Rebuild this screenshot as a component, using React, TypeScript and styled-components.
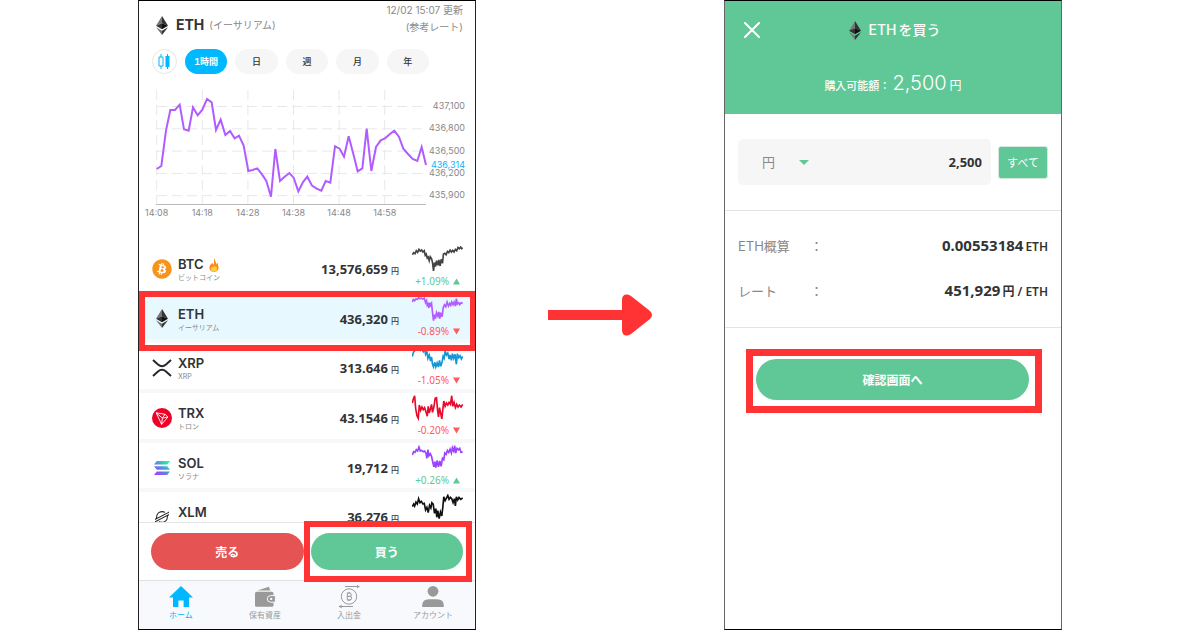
import React from "react";
import styled, { createGlobalStyle, css } from "styled-components";
import { FaBitcoin } from "react-icons/fa";
import { SiStellar } from "react-icons/si";

const GREEN = "#5fc896";
const RED = "#ff3333";
const BLUE = "#00b8ff";
const UI = `Inter, "Noto Sans CJK JP", sans-serif`;
const NUM = `"Noto Sans", "Noto Sans CJK JP", sans-serif`;

const GlobalStyle = createGlobalStyle`
  *, *::before, *::after { box-sizing: border-box; }
  body { margin: 0; background: #fff; font-family: ${UI}; color: #333; }
  button, input, select { font: inherit; color: inherit; border: 0; padding: 0; margin: 0; background: none; }
  button { cursor: pointer; }
  a { color: inherit; text-decoration: none; }
  h1, h2, p, ul, dl, dd, dt { margin: 0; padding: 0; }
  svg { display: block; flex: none; }
`;

const Page = styled.main`
  display: grid;
  grid-template-columns: 338fr 248fr 338fr;
  height: 100vh;
  min-height: 560px;
  padding: 0 11.5%;
`;

const Phone = styled.section<{ $edge: string }>`
  display: flex;
  flex-direction: column;
  min-width: 0;
  min-height: 0;
  border: 1px solid #000;
  border-left-color: ${(p) => p.$edge};
  border-right-color: ${(p) => p.$edge};
  background: #fff;
`;

const ArrowCell = styled.div`
  display: flex;
  align-items: center;
  justify-content: center;
`;

/* Rate screen */

const RateHeader = styled.header`
  display: flex;
  justify-content: space-between;
  height: 48px;
  padding: 0 12px 0 17px;
`;

const CoinTitle = styled.h1`
  display: flex;
  align-items: center;
  gap: 8px;
  height: 48px;
  font-size: 14px;
  font-weight: 700;
  line-height: 20px;
`;

const CoinReading = styled.span`
  margin-left: -3px;
  font-size: 10px;
  font-weight: 400;
  color: #888;
`;

const Updated = styled.p`
  padding-top: 1px;
  font-size: 10px;
  line-height: 17px;
  text-align: right;
  color: #888;
`;

const Periods = styled.div`
  display: flex;
  gap: 8px;
  padding: 0 46px 0 13px;
`;

const ChartKind = styled.button`
  display: grid;
  place-items: center;
  width: 25px;
  height: 25px;
  border: 1px solid #e6e6e6;
  border-radius: 50%;
`;

const Period = styled.button<{ $active?: boolean }>`
  flex: 1;
  height: 25px;
  border-radius: 13px;
  font-size: 9px;
  font-variant-numeric: tabular-nums;
  line-height: 25px;
  font-weight: ${(p) => (p.$active ? 700 : 500)};
  color: ${(p) => (p.$active ? "#fff" : "#333")};
  background: ${(p) => (p.$active ? BLUE : "#f6f6f6")};
`;

const ChartSvg = styled.svg`
  width: 100%;
  height: auto;
  margin: 6px 0 19px;
  font-family: ${UI};
  font-size: 9px;
`;

const ListWindow = styled.div`
  flex: 1;
  min-height: 0;
  overflow: hidden;
`;

const CoinList = styled.ul`
  display: grid;
  grid-auto-rows: 1fr;
  height: 298px;
  list-style: none;
`;

const CoinRow = styled.li<{ $selected?: boolean }>`
  position: relative;
  display: grid;
  grid-template-columns: 20px 1fr auto 51px;
  align-items: start;
  padding: 2px 12px 0 13px;
  border-bottom: 4px solid #f7f8fa;
  background: ${(p) => (p.$selected ? "#e8f8ff" : "#fff")};
`;

const Highlight = css`
  content: "";
  position: absolute;
  z-index: 2;
  pointer-events: none;
  border: 6px solid ${RED};
`;

const MarkedRow = styled(CoinRow)`
  &::after {
    ${Highlight}
    inset: -3px -1px -12px 0;
  }
`;

const IconCell = styled.div`
  display: grid;
  place-items: center;
  height: 43px;
  padding-top: 3px;
`;

const NameCell = styled.div`
  padding: 10px 0 0 6px;
`;

const CoinName = styled.h2`
  display: flex;
  align-items: center;
  gap: 5px;
  font-size: 13px;
  font-weight: 600;
  line-height: 17px;
`;

const CoinSub = styled.p`
  font-size: 7px;
  line-height: 9px;
  color: #888;
`;

const Price = styled.p`
  padding: 13px 13px 0 0;
  font-family: ${NUM};
  font-size: 13px;
  font-weight: 700;
  line-height: 20px;
`;

const Yen = styled.small`
  margin-left: 3px;
  font-size: 8px;
  font-weight: 500;
`;

const Spark = styled.svg`
  width: 51px;
  height: 26px;
`;

const Change = styled.p<{ $up: boolean }>`
  display: flex;
  align-items: center;
  justify-content: flex-end;
  gap: 4px;
  padding-right: 3px;
  margin: 2px 0 0 -6px;
  font-family: ${NUM};
  font-size: 10px;
  line-height: 15px;
  color: ${(p) => (p.$up ? GREEN : "#ff5a5a")};
`;

const Trade = styled.div`
  position: relative;
  z-index: 3;
  display: flex;
  gap: 7px;
  padding: 10px 12px;
  border-top: 1px solid #e3e5e8;
  background: #fff;
`;

const TradeSlot = styled.div<{ $marked?: boolean }>`
  position: relative;
  flex: 1;
  ${(p) =>
    p.$marked &&
    css`
      &::after {
        ${Highlight}
        inset: -12px -9px -12px -7px;
      }
    `}
`;

const Pill = styled.button<{ $color: string; $height: number }>`
  display: block;
  width: 100%;
  height: ${(p) => p.$height}px;
  border-radius: ${(p) => p.$height / 2}px;
  font-size: 12px;
  font-weight: 700;
  color: #fff;
  background: ${(p) => p.$color};
`;

const TabBar = styled.nav`
  display: grid;
  grid-template-columns: repeat(4, 1fr);
  height: 49px;
  padding-top: 4px;
  border-top: 1px solid #dfe2e5;
  background: #f7f9fc;
`;

const Tab = styled.a<{ $active?: boolean }>`
  display: flex;
  flex-direction: column;
  align-items: center;
  font-size: 8px;
  line-height: 12px;
  color: ${(p) => (p.$active ? BLUE : "#999")};
`;

/* Order screen */

const OrderHeader = styled.header`
  height: 113px;
  color: #fff;
  background: ${GREEN};
`;

const OrderBar = styled.div`
  display: grid;
  grid-template-columns: 54px 1fr 50px;
  align-items: center;
  height: 58px;
`;

const Close = styled.button`
  display: grid;
  place-items: center;
  height: 30px;
`;

const OrderTitle = styled.h1`
  display: flex;
  align-items: center;
  justify-content: center;
  gap: 7px;
  font-size: 14px;
  font-weight: 500;
  line-height: 20px;
`;

const TitleText = styled.span`
  display: flex;
  gap: 2px;
`;

const Available = styled.p`
  display: flex;
  align-items: baseline;
  justify-content: center;
  padding-top: 12px;
  font-size: 11px;
  font-weight: 500;
  line-height: 24px;
`;

const AvailableAmount = styled.span`
  margin: 0 3px 0 2px;
  font-size: 20px;
  font-weight: 300;
`;

const AvailableUnit = styled.span`
  font-size: 12px;
  font-weight: 400;
`;

const Amount = styled.form`
  display: flex;
  align-items: center;
  gap: 7px;
  padding: 25px 13px;
  border-bottom: 1px solid #e3e3e3;
`;

const Field = styled.div`
  display: flex;
  flex: 1;
  align-items: center;
  min-width: 0;
  height: 46px;
  padding: 0 9px 0 24px;
  border-radius: 5px;
  background: #f6f6f6;
`;

const Unit = styled.select`
  appearance: none;
  width: 37px;
  font-size: 13px;
  color: #888;
`;

const AmountInput = styled.input`
  flex: 1;
  min-width: 0;
  font-family: ${NUM};
  font-size: 13px;
  font-weight: 700;
  text-align: right;
`;

const AllButton = styled.button`
  width: 50px;
  height: 33px;
  border-radius: 3px;
  border: 1px solid #d5e8de;
  font-size: 11px;
  color: #fff;
  background: ${GREEN};
`;

const Summary = styled.dl`
  padding: 12px 13px 14px;
  border-bottom: 1px solid #e3e3e3;
`;

const SummaryRow = styled.div`
  display: flex;
  align-items: center;
  height: 45px;
  font-size: 13px;
  color: #888;
`;

const Term = styled.dt`
  width: 72px;
`;

const Value = styled.dd`
  margin-left: auto;
  font-family: ${NUM};
  font-size: 15px;
  font-weight: 700;
  line-height: 20px;
  color: #333;
`;

const ValueUnit = styled.small`
  margin-left: 2px;
  font-size: 12px;
  font-weight: 600;
`;

const ConfirmBox = styled.div`
  margin: 21px 19px 0 21px;
  padding: 3px 6px 6px 3px;
  border: 7px solid ${RED};
`;

/* Drawings */

const EthIcon = () => (
  <svg width="12" height="19" viewBox="0 0 12 19" aria-hidden="true">
    <path d="M6 0 0 9.8 6 7.2Z" fill="#777" />
    <path d="M6 0 12 9.8 6 7.2Z" fill="#333" />
    <path d="M0 9.8 6 7.2V13.3Z" fill="#333" />
    <path d="M12 9.8 6 7.2V13.3Z" fill="#111" />
    <path d="M0 11.2 6 14.8V19Z" fill="#777" />
    <path d="M12 11.2 6 14.8V19Z" fill="#333" />
  </svg>
);

const XrpIcon = () => (
  <svg width="20" height="18" viewBox="0 0 20 18" fill="none" stroke="#23292f" strokeWidth="2" aria-hidden="true">
    <path d="M1 1 6 5.600Q10 9 14 5.600L19 1" />
    <path d="M1 17 6 12.400Q10 9 14 12.400L19 17" />
  </svg>
);

const TrxIcon = () => (
  <svg width="20" height="20" viewBox="0 0 20 20" aria-hidden="true">
    <circle cx="10" cy="10" r="10" fill="#ef0027" />
    <path d="M4.2 4.8 13 6.3 15.9 9 9.6 16.4ZM4.2 4.8 10.4 10.1 15.9 9M13 6.3 10.4 10.1 9.6 16.4" fill="none" stroke="#fff" strokeWidth="0.9" strokeLinejoin="round" />
  </svg>
);

const SolIcon = () => (
  <svg width="16" height="14" viewBox="0 0 16 14" aria-hidden="true">
    <defs>
      <linearGradient id="sol" x1="0" y1="1" x2="1" y2="0">
        <stop offset="0.1" stopColor="#9945ff" />
        <stop offset="0.5" stopColor="#5a8be0" />
        <stop offset="0.9" stopColor="#19fb9b" />
      </linearGradient>
    </defs>
    <path d="M2.8 0H16L13.2 3.6H0ZM0 5.2H13.2L16 8.8H2.8ZM2.8 10.4H16L13.2 14H0Z" fill="url(#sol)" />
  </svg>
);

const BtcIcon = () => (
  <FaBitcoin size={20} color="#f7931a" aria-hidden="true" />
);

const XlmIcon = () => <SiStellar size={14} color="#222" aria-hidden="true" />;

const Flame = () => (
  <svg width="10" height="14" viewBox="0 0 10 14" aria-hidden="true">
    <path d="M5.600 0C4.200 2 5.600 4 4.800 6.800 4.200 6.400 3.600 5.600 3.400 4.800 2.200 6 .4 7.400 .4 10A4.600 4 0 0 0 5 14 4.600 4 0 0 0 9.600 10C9.600 8.200 8.800 7 8.800 4.800 8.200 5.200 7.800 6 7.600 6.600 7.400 4 5.400 3 5.600 0Z" fill="#ff8a1c" />
    <path d="M5.400 7.400C5 8.600 4.600 9 4 9.600 3.600 9.400 3.400 9 3.200 8.600 2.400 9.400 2 10.200 2 11A3 2.800 0 0 0 5 13.700 3 2.800 0 0 0 8 11C8 9.600 7.200 9 7 8.200 6.600 8.600 6.400 9 6.300 9.300 5.900 8.800 5.500 8.200 5.400 7.400Z" fill="#ffd23c" />
  </svg>
);

const Triangle = ({ up }: { up: boolean }) => (
  <svg width="7" height="7" viewBox="0 0 7 7" fill="currentColor" aria-hidden="true">
    <path d={up ? "M3.5 .5 7 6.5H0Z" : "M3.5 6.5 0 .5H7Z"} />
  </svg>
);

const HomeIcon = () => (
  <svg width="24" height="24" viewBox="0 0 24 24" fill="currentColor" aria-hidden="true">
    <path d="M12 1 24 12.6H20V22H14.6V15.5H9.4V22H4V12.6H0Z" />
  </svg>
);

const WalletIcon = () => (
  <svg width="24" height="24" viewBox="0 0 24 24" aria-hidden="true">
    <path d="M4.5 5.6 15.8 1.8 17.3 5.6Z" fill="#999" />
    <rect x="2" y="6.8" width="18.5" height="15" rx="1.6" fill="#999" />
    <path d="M22.4 10.6H17.6A3.3 3.3 0 0 0 17.6 17.2H22.4Z" fill="#999" stroke="#f7f9fc" />
    <circle cx="18.2" cy="13.9" r="1.2" fill="#f7f9fc" />
  </svg>
);

const TransferIcon = () => (
  <svg width="24" height="24" viewBox="0 0 24 24" fill="none" stroke="currentColor" aria-hidden="true">
    <circle cx="12" cy="11.5" r="7.7" />
    <path d="M8 1.5H20.5M3.5 21.5H16" />
    <path d="M20 0 23 1.5 20 3.300ZM4.600 19.700 1.500 21.5 4.600 23.300Z" fill="currentColor" stroke="none" />
    <path d="M10.300 8.200H12.700A1.600 1.600 0 0 1 12.700 11.400H10.300H13A1.700 1.700 0 0 1 13 14.800H10.300ZM11.100 7V8.200M12.700 7V8.200M11.100 14.800V16M12.700 14.800V16" />
  </svg>
);

const AccountIcon = () => (
  <svg width="24" height="24" viewBox="0 0 24 24" fill="currentColor" aria-hidden="true">
    <circle cx="12" cy="6.3" r="5.4" />
    <path d="M1.2 22V20.4Q1.2 14.2 8 14.2H16Q22.8 14.2 22.8 20.4V22Z" />
  </svg>
);

const CandleIcon = () => (
  <svg width="13" height="15" viewBox="0 0 13 15" aria-hidden="true">
    <path d="M3 0V3M3 12V15M1 3H5V12H1Z" fill="none" stroke={BLUE} />
    <path d="M9.5 0V15" stroke={BLUE} />
    <rect x="7.5" y="2" width="4" height="11" fill={BLUE} />
  </svg>
);

/* Data */

const RATE_LINE =
  "62,267 76,258 90,152 103,90 117,90 131,74 144,148 158,152 171,82 185,106 199,89 213,57 227,67 240,150 254,119 268,165 282,153 296,175 309,167 323,197 337,273 350,270 364,265 378,283 391,303 405,350 418,207 432,303 446,290 460,279 473,293 487,334 501,306 514,290 528,317 542,326 556,332 569,303 583,308 597,199 611,206 624,230 638,169 652,222 665,274 679,265 692,146 706,273 720,201 734,181 747,175 761,163 775,152 789,171 802,206 816,222 830,237 844,243 857,201 870,255";

const X_TICKS = ["14:08", "14:18", "14:28", "14:38", "14:48", "14:58"];
const Y_TICKS = ["437,100", "436,800", "436,500", "436,200", "435,900"];

interface Coin {
  code: string;
  price: string;
  color: string;
  Icon: () => React.JSX.Element;
  line: string;
  reading?: string;
  change?: string;
  hot?: boolean;
  selected?: boolean;
}

const COINS: Coin[] = [
  {
    code: "BTC", reading: "ビットコイン", price: "13,576,659", change: "+1.09%", color: "#444", Icon: BtcIcon, hot: true,
    line: "313,26 317,20 321,23 325,14 329,19 333,10 337,15 341,12 345,18 349,14 352,28 355,24 358,36 361,33 364,44 367,32 371,38 374,50 377,75 380,50 383,62 386,44 390,58 393,42 397,60 400,40 404,52 407,24 411,22 415,26 419,16 423,20 427,12 431,18 435,13 439,18 443,10 447,14 451,4 455,8 459,3 462,8 465,5",
  },
  {
    code: "ETH", reading: "イーサリアム", price: "436,320", change: "-0.89%", color: "#b15cff", Icon: EthIcon, selected: true,
    line: "313,18 316,10 320,14 324,8 328,10 332,5 336,8 340,6 345,9 349,6 353,20 356,14 358,28 361,24 363,36 365,20 368,28 371,22 374,50 377,74 380,56 383,68 386,50 390,60 393,48 396,68 399,50 403,62 406,36 410,26 414,32 418,18 422,30 426,22 429,28 432,18 436,26 439,18 443,30 446,8 449,24 453,20 456,26 460,20 465,22",
  },
  {
    code: "XRP", reading: "XRP", price: "313.646", change: "-1.05%", color: "#1296d4", Icon: XrpIcon,
    line: "313,35 316,22 320,18 325,8 329,14 333,10 337,16 341,12 346,20 350,10 353,28 357,20 360,40 364,30 368,48 371,36 374,58 377,66 381,52 384,66 388,54 392,66 395,46 399,64 403,50 406,34 409,40 412,18 416,30 420,24 424,42 427,30 431,46 434,26 438,40 442,28 446,58 449,26 453,38 457,32 461,42 465,34",
  },
  {
    code: "TRX", reading: "トロン", price: "43.1546", change: "-0.20%", color: "#e60a2d", Icon: TrxIcon,
    line: "313,24 316,12 320,2 323,40 327,62 331,70 334,30 338,46 342,36 346,44 350,38 354,50 358,64 361,34 364,54 367,44 371,28 374,52 378,36 382,10 386,8 389,44 392,66 395,38 398,52 402,72 405,44 408,18 412,34 416,24 420,30 424,22 428,28 432,2 435,34 439,22 443,38 447,28 451,36 455,30 460,36 465,28",
  },
  {
    code: "SOL", reading: "ソラナ", price: "19,712", change: "+0.26%", color: "#9945ff", Icon: SolIcon,
    line: "313,30 317,20 321,22 325,14 329,18 333,6 337,18 341,16 346,20 350,18 354,24 357,40 360,14 363,32 367,26 371,34 374,48 378,66 381,50 384,68 388,46 392,66 396,48 400,64 404,40 408,44 411,24 415,28 419,16 423,22 427,12 431,24 434,8 438,18 441,2 444,24 448,10 452,14 456,10 460,22 465,20",
  },
  {
    code: "XLM", price: "36.276", color: "#111", Icon: XlmIcon,
    line: "313,38 317,30 320,36 324,24 328,30 332,14 336,26 340,22 345,30 349,28 353,48 357,40 361,56 365,34 369,42 372,26 376,30 380,58 384,44 387,70 390,50 394,74 398,54 402,66 405,40 408,8 412,20 416,12 420,4 424,16 428,10 432,14 436,26 440,14 443,36 446,8 450,18 454,10 459,16 465,12",
  },
];

const RateChart = () => (
  <ChartSvg viewBox="0 0 336 145" role="img" aria-label="ETH 1時間チャート">
    <g stroke="#e8e8e8" strokeDasharray="10 5">
      {Y_TICKS.map((t, i) => (
        <line key={t} x1="18" x2="287" y1={26.5 + i * 22.3} y2={26.5 + i * 22.3} />
      ))}
      {X_TICKS.map((t, i) => (
        <line key={t} x1={17.7 + i * 45.6} x2={17.7 + i * 45.6} y1="10" y2="124" />
      ))}
    </g>
    <line x1="17" x2="287" y1="124.5" y2="124.5" stroke="#bbb" />
    <g fill="#888">
      {Y_TICKS.map((t, i) => (
        <text key={t} x="326" y={29 + i * 22.3} textAnchor="end">{t}</text>
      ))}
      {X_TICKS.map((t, i) => (
        <text key={t} x={17.7 + i * 45.6} y="136" textAnchor="middle">{t}</text>
      ))}
    </g>
    <text x="326" y="88" textAnchor="end" fill={BLUE}>436,314</text>
    <g transform="translate(-3 0) scale(0.33333)">
      <polyline points={RATE_LINE} fill="none" stroke="#b15cff" strokeWidth="6" />
    </g>
  </ChartSvg>
);

const CoinItem = ({ coin }: { coin: Coin }) => {
  const Row = coin.selected ? MarkedRow : CoinRow;
  const up = !!coin.change?.startsWith("+");
  return (
    <Row $selected={coin.selected}>
      <IconCell><coin.Icon /></IconCell>
      <NameCell>
        <CoinName>{coin.code}{coin.hot && <Flame />}</CoinName>
        {coin.reading && <CoinSub>{coin.reading}</CoinSub>}
      </NameCell>
      <Price>{coin.price}<Yen>円</Yen></Price>
      <div>
        <Spark viewBox="312 0 154 78" aria-hidden="true">
          <polyline points={coin.line} fill="none" stroke={coin.color} strokeWidth="5" />
        </Spark>
        {coin.change && <Change $up={up}>{coin.change}<Triangle up={up} /></Change>}
      </div>
    </Row>
  );
};

const RateScreen = () => (
  <Phone $edge="#222">
    <RateHeader>
      <CoinTitle>
        <EthIcon />
        ETH
        <CoinReading>(イーサリアム)</CoinReading>
      </CoinTitle>
      <Updated>12/02 15:07 更新<br />(参考レート)</Updated>
    </RateHeader>
    <Periods>
      <ChartKind aria-label="ローソク足"><CandleIcon /></ChartKind>
      <Period $active>1時間</Period>
      <Period>日</Period>
      <Period>週</Period>
      <Period>月</Period>
      <Period>年</Period>
    </Periods>
    <RateChart />
    <ListWindow>
      <CoinList>
        {COINS.map((c) => <CoinItem key={c.code} coin={c} />)}
      </CoinList>
    </ListWindow>
    <Trade>
      <TradeSlot><Pill $color="#e65353" $height={37}>売る</Pill></TradeSlot>
      <TradeSlot $marked><Pill $color={GREEN} $height={37}>買う</Pill></TradeSlot>
    </Trade>
    <TabBar>
      <Tab href="#home" $active><HomeIcon />ホーム</Tab>
      <Tab href="#assets"><WalletIcon />保有資産</Tab>
      <Tab href="#transfer"><TransferIcon />入出金</Tab>
      <Tab href="#account"><AccountIcon />アカウント</Tab>
    </TabBar>
  </Phone>
);

const OrderScreen = () => (
  <Phone $edge="#666">
    <OrderHeader>
      <OrderBar>
        <Close aria-label="閉じる">
          <svg width="16" height="16" viewBox="0 0 16 16" stroke="#fff" strokeWidth="2" strokeLinecap="round" aria-hidden="true">
            <path d="M1 1 15 15M15 1 1 15" />
          </svg>
        </Close>
        <OrderTitle>
          <EthIcon />
          <TitleText><span>ETH</span><span>を買う</span></TitleText>
        </OrderTitle>
      </OrderBar>
      <Available>
        購入可能額：<AvailableAmount>2,500</AvailableAmount><AvailableUnit>円</AvailableUnit>
      </Available>
    </OrderHeader>
    <Amount>
      <Field>
        <Unit aria-label="通貨" defaultValue="jpy">
          <option value="jpy">円</option>
          <option value="eth">ETH</option>
        </Unit>
        <svg width="10" height="5" viewBox="0 0 10 5" fill={GREEN} aria-hidden="true"><path d="M0 0H10L5 5Z" /></svg>
        <AmountInput aria-label="購入金額" defaultValue="2,500" />
      </Field>
      <AllButton type="button">すべて</AllButton>
    </Amount>
    <Summary>
      <SummaryRow>
        <Term>ETH概算</Term>：
        <Value>0.00553184<ValueUnit>ETH</ValueUnit></Value>
      </SummaryRow>
      <SummaryRow>
        <Term>レート</Term>：
        <Value>451,929<ValueUnit>円 / ETH</ValueUnit></Value>
      </SummaryRow>
    </Summary>
    <ConfirmBox>
      <Pill $color={GREEN} $height={41}>確認画面へ</Pill>
    </ConfirmBox>
  </Phone>
);

export default function App() {
  return (
    <>
      <GlobalStyle />
      <Page>
        <RateScreen />
        <ArrowCell>
          <svg width="106" height="42" viewBox="0 0 106 42" fill={RED} aria-hidden="true">
            <path d="M1 16H75V6Q75 0 80.5 .5 82 .6 84 2L103 17Q107 21 103 25L84 40Q82 41.4 80.5 41.5 75 42 75 36V26H1Z" />
          </svg>
        </ArrowCell>
        <OrderScreen />
      </Page>
    </>
  );
}
